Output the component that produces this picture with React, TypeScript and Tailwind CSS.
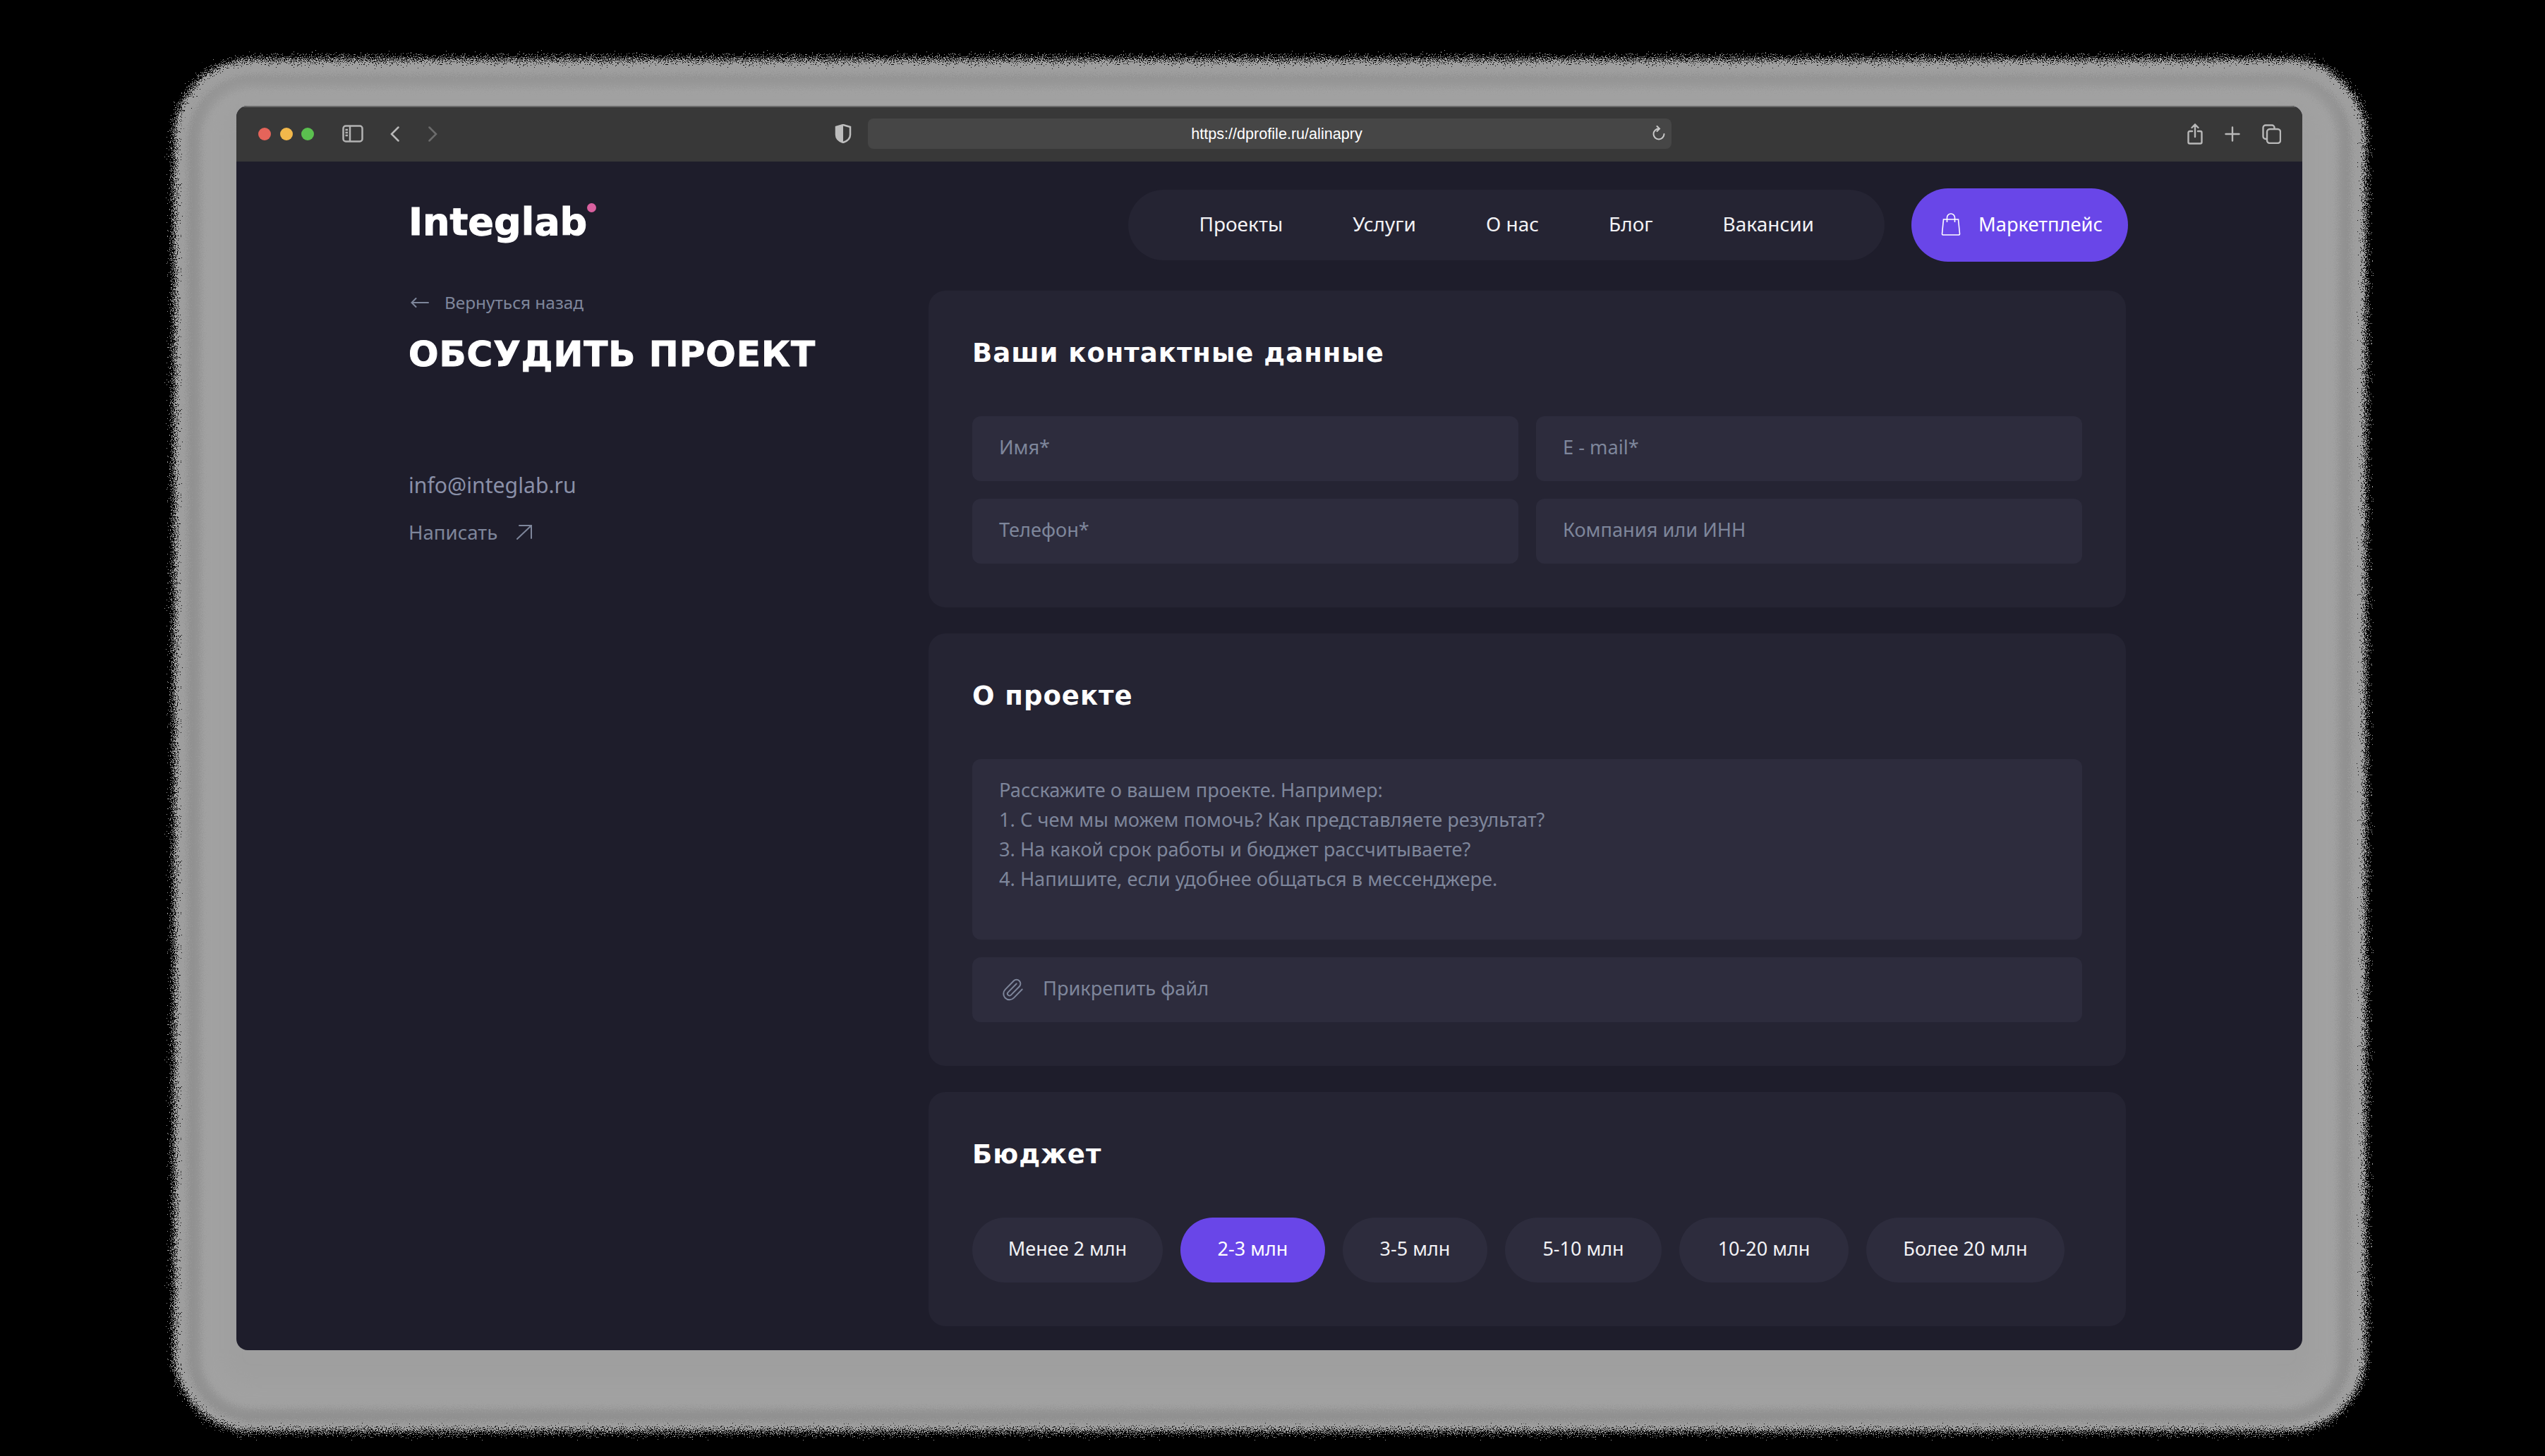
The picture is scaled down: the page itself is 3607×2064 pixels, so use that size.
import { Paperclip } from "lucide-react";

const budgets = [
  { label: "Менее 2 млн", width: "w-[270px]" },
  { label: "2-3 млн", width: "w-[205px]" },
  { label: "3-5 млн", width: "w-[205px]" },
  { label: "5-10 млн", width: "w-[222px]" },
  { label: "10-20 млн", width: "w-[240px]" },
  { label: "Более 20 млн", width: "w-[281px]" },
];
const navItems = ["Проекты", "Услуги", "О нас", "Блог", "Вакансии"];

// grey halo with the dithered edge behind the window
function Halo() {
  return (
    <svg className="absolute inset-0" width="3607" height="2064" viewBox="0 0 3607 2064">
      <defs>
        <filter id="grain" x="-5%" y="-5%" width="110%" height="110%">
          <feTurbulence type="fractalNoise" baseFrequency="0.8" numOctaves="2" seed="4" result="n" />
          <feDisplacementMap in="SourceGraphic" in2="n" scale="42" xChannelSelector="R" yChannelSelector="G" />
        </filter>
        <filter id="ring" x="-5%" y="-5%" width="110%" height="110%">
          <feGaussianBlur stdDeviation="3" result="b" />
          <feTurbulence type="fractalNoise" baseFrequency="0.8" numOctaves="2" seed="9" result="n" />
          <feDisplacementMap in="b" in2="n" scale="24" xChannelSelector="R" yChannelSelector="G" />
        </filter>
        <filter id="soft">
          <feGaussianBlur stdDeviation="14" />
        </filter>
      </defs>
      <rect x="247" y="84" width="3106" height="1945" rx="110" fill="#9f9f9f" filter="url(#grain)" />
      <rect x="276" y="116" width="3046" height="1890" rx="84" fill="none" stroke="#8e8e8e" strokeWidth="20" filter="url(#ring)" />
      <rect x="300" y="130" width="2998" height="1850" rx="50" fill="none" stroke="#a3a3a3" strokeWidth="24" filter="url(#soft)" />
    </svg>
  );
}

function Toolbar() {
  return (
    <div className="flex h-[79px] items-center border-t-2 border-[#6a6a6a] bg-[#383838] pb-[2px] pl-[31px]">
      <div className="flex gap-[12.5px]">
        <span className="h-[18px] w-[18px] rounded-full bg-[#e5645a]" />
        <span className="h-[18px] w-[18px] rounded-full bg-[#f2b84b]" />
        <span className="h-[18px] w-[18px] rounded-full bg-[#5bc04f]" />
      </div>
      <svg className="ml-[40px]" width="30" height="25" viewBox="0 0 30 25" fill="none" stroke="#b3b3b3" strokeWidth="2.5">
        <rect x="1.5" y="1.5" width="27" height="22" rx="3.5" />
        <path d="M11 2v21M4.5 7h3.5M4.5 11h3.5M4.5 15h3.5" />
      </svg>
      <svg className="ml-[38px]" width="13" height="22" viewBox="0 0 13 22" fill="none" stroke="#b8b8b8" strokeWidth="2.5" strokeLinecap="round">
        <path d="M11.5 1.5 2 11l9.5 9.5" />
      </svg>
      <svg className="ml-[41px]" width="13" height="22" viewBox="0 0 13 22" fill="none" stroke="#6c6c6c" strokeWidth="2.5" strokeLinecap="round">
        <path d="M1.5 1.5 11 11l-9.5 9.5" />
      </svg>
      <svg className="ml-[563px]" width="24" height="27" viewBox="0 0 24 27">
        <path d="M12 1 22 4v11c0 5-4 9-10 11C6 24 2 20 2 15V4z" fill="none" stroke="#bdbdbd" strokeWidth="2.5" />
        <path d="M12 1v25C6 24 2 20 2 15V4z" fill="#bdbdbd" />
      </svg>
      <div className="relative ml-[23px] flex h-[43px] w-[1139px] items-center justify-center rounded-lg bg-[#464646] pt-[2px] pl-[20px] font-['Liberation_Sans',sans-serif] text-[21.6px] text-white">
        https://dprofile.ru/alinapry
        <svg className="absolute top-[10px] right-[9px]" width="18" height="21" viewBox="0 0 18 21" fill="none" stroke="#c8c8c8" strokeWidth="2" strokeLinecap="round">
          <path d="M9 4.5a7.5 7.5 0 1 0 7.5 7.5M6.5 1 10 4.5 6.5 8" />
        </svg>
      </div>
      <svg className="ml-[731px]" width="22" height="30" viewBox="0 0 22 30" fill="none" stroke="#b8b8b8" strokeWidth="2.4" strokeLinecap="round">
        <path d="M7 11H3.5a2 2 0 0 0-2 2v13.5a2 2 0 0 0 2 2h15a2 2 0 0 0 2-2V13a2 2 0 0 0-2-2H15M11 19V2M6.5 6 11 1.5 15.5 6" />
      </svg>
      <svg className="ml-[31px]" width="22" height="22" viewBox="0 0 22 22" stroke="#b8b8b8" strokeWidth="2.4" strokeLinecap="round">
        <path d="M11 1.5v19M1.5 11h19" />
      </svg>
      <svg className="ml-[31px]" width="27" height="28" viewBox="0 0 27 28" fill="none" stroke="#b8b8b8" strokeWidth="2.4">
        <rect x="7" y="7" width="19" height="20" rx="4" />
        <path d="M7 21H5a3.500 3.500 0 0 1-3.500-3.500V5A3.500 3.500 0 0 1 5 1.500h9A3.500 3.500 0 0 1 17.500 5v2" />
      </svg>
    </div>
  );
}

function Header() {
  return (
    <div className="flex items-start pt-[38px]">
      <div className="relative mt-[18px] ml-[2px] font-['DejaVu_Sans',sans-serif] text-[54px] leading-[60px] font-bold text-white [-webkit-text-stroke:1px_white]">
        Integlab
        <span className="absolute top-[3px] right-[-13px] h-[13px] w-[13px] rounded-full bg-[#d9609f]" />
      </div>
      <div className="mt-[2px] ml-auto flex h-[100px] items-center gap-[99px] rounded-full bg-[#252433] px-[100px] pb-[4px] text-[28px] text-[#f2f2f5]">
        {navItems.map((item) => (
          <span key={item}>{item}</span>
        ))}
      </div>
      <div className="ml-[38px] flex h-[104px] w-[307px] items-center gap-[25px] rounded-full bg-[#6946e8] pb-[2px] pl-[42px] text-[27.3px] text-white">
        <svg width="28" height="32" viewBox="0 0 28 32" fill="none" stroke="#fff" strokeWidth="1.6">
          <path d="M3.500 9h21l2 20.500a1.500 1.500 0 0 1-1.500 1.500H3a1.500 1.500 0 0 1-1.500-1.500z" />
          <path d="M8.500 13V6.500a5.500 5.500 0 0 1 11 0V13" />
        </svg>
        Маркетплейс
      </div>
    </div>
  );
}

function Field({ label }: { label: string }) {
  return (
    <div className="flex h-[92px] items-center rounded-xl bg-[#2d2c3d] px-[38px] pb-[3px] text-[27.2px] text-[#7e869b]">
      {label}
    </div>
  );
}

function Card({ title, children }: { title: string; children: React.ReactNode }) {
  return (
    <div className="rounded-3xl bg-[#252433] px-[62px] py-[62px]">
      <h2 className="mb-[62px] h-[54px] font-['DejaVu_Sans',sans-serif] text-[37px] leading-[54px] font-bold tracking-[1px] text-white">
        {title}
      </h2>
      {children}
    </div>
  );
}

export default function App() {
  return (
    <div className="relative h-[2064px] w-[3607px] overflow-hidden bg-black font-['Noto_Sans',sans-serif]">
      <Halo />
      <div className="relative mt-[150px] ml-[335px] h-[1764px] w-[2928px] overflow-hidden rounded-2xl bg-[#1e1d2b]">
        <Toolbar />
        <div className="pr-[247px] pl-[242px]">
          <Header />
          <div className="mt-[41px] flex">
            <div className="w-[739px] shrink-0 pl-[2px]">
              <div className="flex h-[34px] items-center gap-[22px] text-[24.4px] text-[#7e869b]">
                <svg className="ml-[3px]" width="26" height="14" viewBox="0 0 26 14" fill="none" stroke="#7e869b" strokeWidth="2" strokeLinecap="round">
                  <path d="M25 7H1.500M7.500 1 1.500 7l6 6" />
                </svg>
                Вернуться назад
              </div>
              <h1 className="mt-[26px] font-['DejaVu_Sans',sans-serif] text-[50px] leading-[60px] font-bold tracking-[1px] text-white [-webkit-text-stroke:1px_white]">
                ОБСУДИТЬ ПРОЕКТ
              </h1>
              <div className="mt-[134px] text-[30.2px] leading-[44px] text-[#8a90a8]">info@integlab.ru</div>
              <div className="mt-[24px] flex items-center gap-[26px] text-[27.6px] leading-[40px] text-[#7e869b]">
                Написать
                <svg width="24" height="22" viewBox="0 0 24 22" fill="none" stroke="#7e869b" strokeWidth="2" strokeLinecap="round">
                  <path d="M2 21 22 2M5 2h17v18" />
                </svg>
              </div>
            </div>
            <div className="flex w-[1697px] shrink-0 flex-col gap-[37px]">
              <Card title="Ваши контактные данные">
                <div className="grid grid-cols-2 gap-[25px]">
                  <Field label="Имя*" />
                  <Field label="E - mail*" />
                  <Field label="Телефон*" />
                  <Field label="Компания или ИНН" />
                </div>
              </Card>
              <Card title="О проекте">
                <div className="h-[256px] rounded-xl bg-[#2d2c3d] px-[38px] py-[23px] text-[27.2px] leading-[42px] text-[#7e869b]">
                  <p>Расскажите о вашем проекте. Например:</p>
                  <p>1. С чем мы можем помочь? Как представляете результат?</p>
                  <p>3. На какой срок работы и бюджет рассчитываете?</p>
                  <p>4. Напишите, если удобнее общаться в мессенджере.</p>
                </div>
                <div className="mt-[25px] flex h-[92px] items-center gap-[26px] rounded-xl bg-[#2d2c3d] pl-[40px] text-[27.2px] text-[#7e869b]">
                  <Paperclip size={34} strokeWidth={1.4} />
                  <span className="pb-[3px]">Прикрепить файл</span>
                </div>
              </Card>
              <Card title="Бюджет">
                <div className="flex gap-[25px]">
                  {budgets.map((b) => (
                    <div
                      key={b.label}
                      className={`flex h-[92px] items-center justify-center rounded-full pb-[3px] text-[27px] ${b.width} ${
                        b.label === "2-3 млн" ? "bg-[#6946e8] text-white" : "bg-[#2d2c3d] text-[#f2f2f5]"
                      }`}
                    >
                      {b.label}
                    </div>
                  ))}
                </div>
              </Card>
            </div>
          </div>
        </div>
      </div>
    </div>
  );
}
